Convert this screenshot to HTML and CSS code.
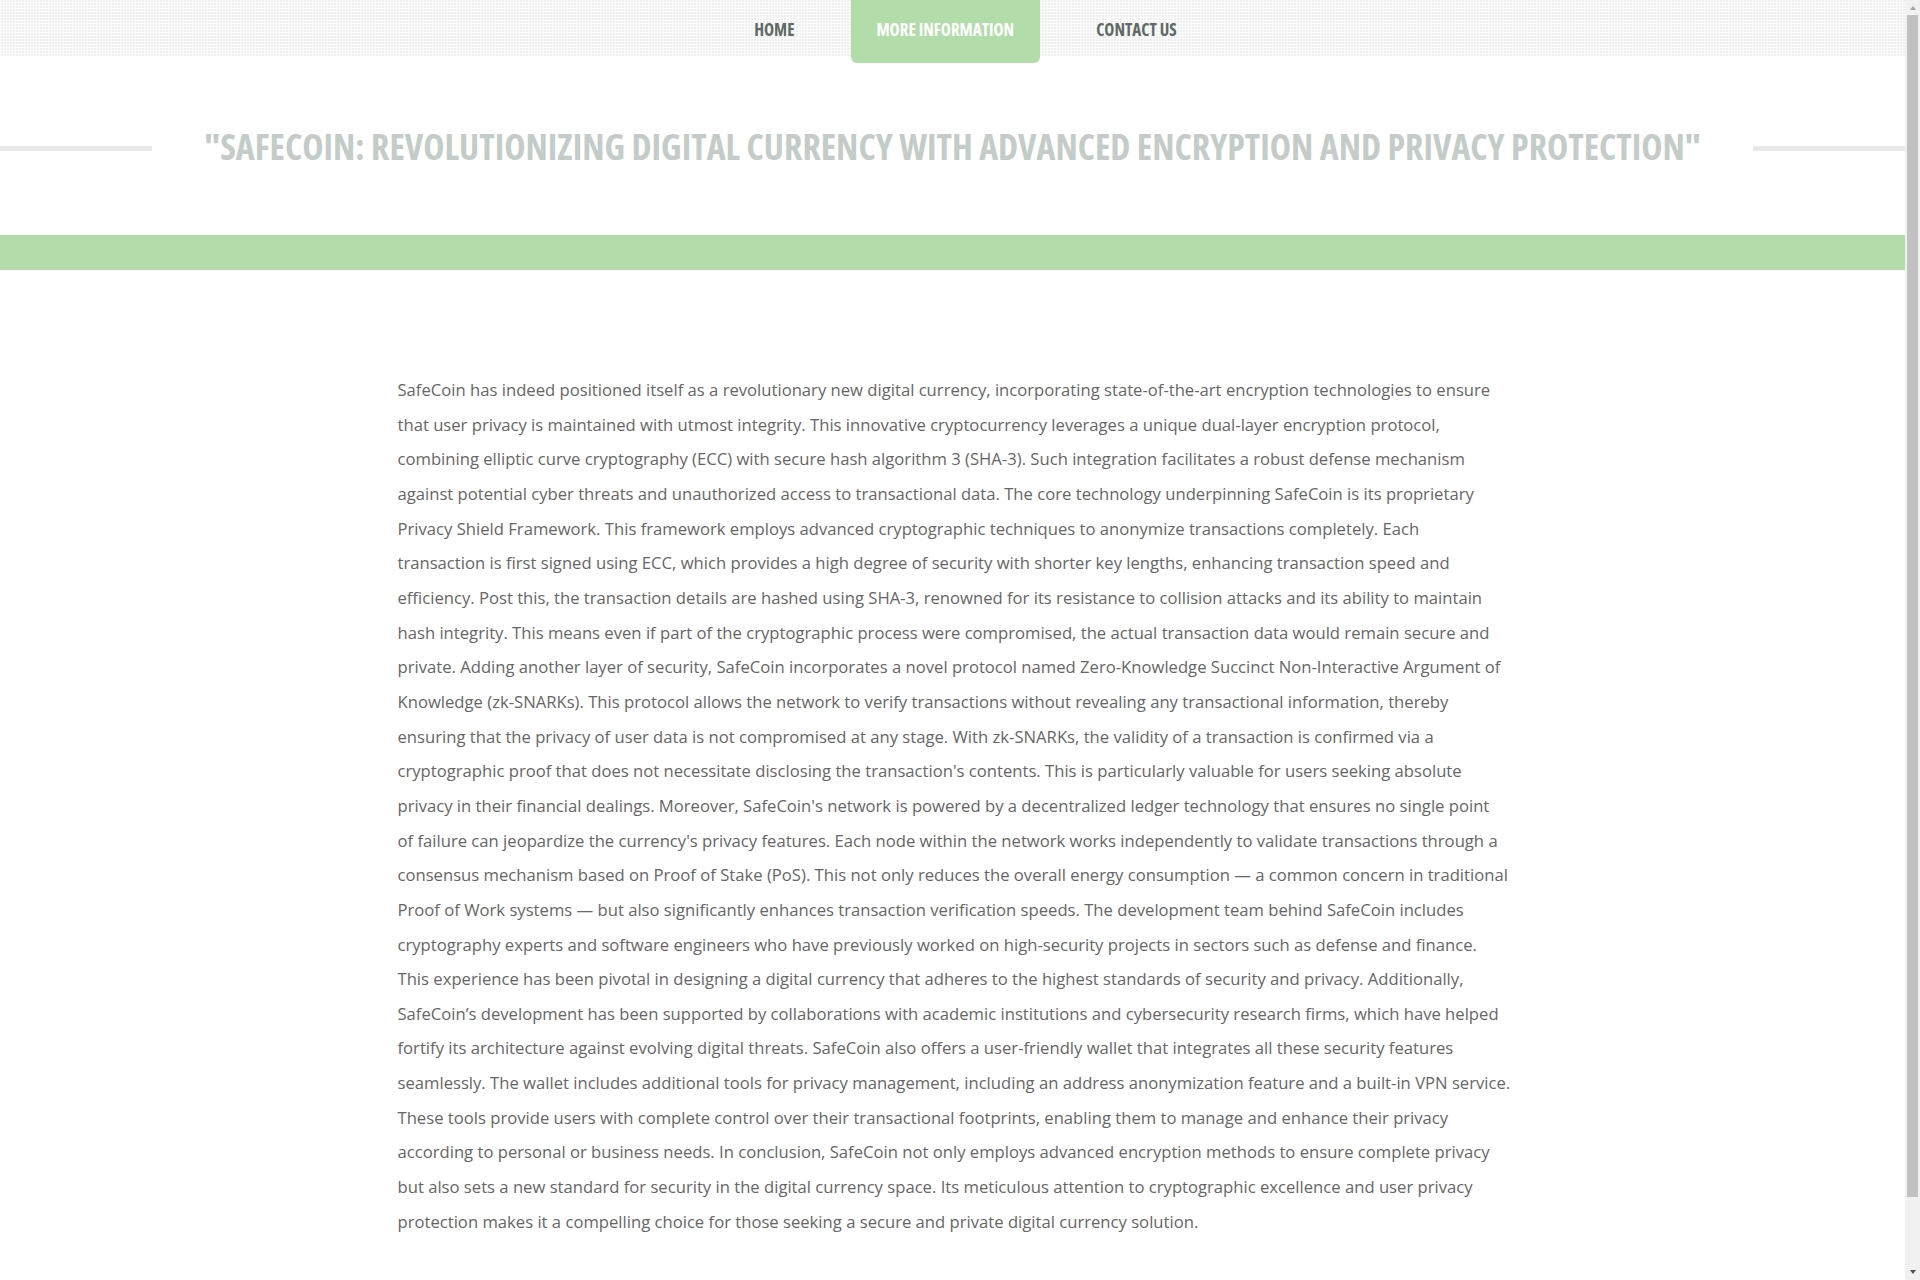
FILE: index.html
```html
<!DOCTYPE html>
<html lang="en">
<head>
<meta charset="utf-8">
<title>SafeCoin</title>
<link rel="stylesheet" href="styles.css">
</head>
<body>
<div class="page">
<header class="topbar">
  <nav class="menu">
    <a class="menu-item" href="#">HOME</a>
    <a class="menu-item active" href="#">MORE INFORMATION</a>
    <a class="menu-item" href="#">CONTACT US</a>
  </nav>
</header>
<section class="title-section">
  <h1 class="page-title"><span>"SAFECOIN: REVOLUTIONIZING DIGITAL CURRENCY WITH ADVANCED ENCRYPTION AND PRIVACY PROTECTION"</span></h1>
</section>
<div class="band"></div>
<main class="content">
  <p class="article">SafeCoin has indeed positioned itself as a revolutionary new digital currency, incorporating state-of-the-art encryption technologies to ensure<br>
that user privacy is maintained with utmost integrity. This innovative cryptocurrency leverages a unique dual-layer encryption protocol,<br>
combining elliptic curve cryptography (ECC) with secure hash algorithm 3 (SHA-3). Such integration facilitates a robust defense mechanism<br>
against potential cyber threats and unauthorized access to transactional data. The core technology underpinning SafeCoin is its proprietary<br>
Privacy Shield Framework. This framework employs advanced cryptographic techniques to anonymize transactions completely. Each<br>
transaction is first signed using ECC, which provides a high degree of security with shorter key lengths, enhancing transaction speed and<br>
efficiency. Post this, the transaction details are hashed using SHA-3, renowned for its resistance to collision attacks and its ability to maintain<br>
hash integrity. This means even if part of the cryptographic process were compromised, the actual transaction data would remain secure and<br>
private. Adding another layer of security, SafeCoin incorporates a novel protocol named Zero-Knowledge Succinct Non-Interactive Argument of<br>
Knowledge (zk-SNARKs). This protocol allows the network to verify transactions without revealing any transactional information, thereby<br>
ensuring that the privacy of user data is not compromised at any stage. With zk-SNARKs, the validity of a transaction is confirmed via a<br>
cryptographic proof that does not necessitate disclosing the transaction's contents. This is particularly valuable for users seeking absolute<br>
privacy in their financial dealings. Moreover, SafeCoin's network is powered by a decentralized ledger technology that ensures no single point<br>
of failure can jeopardize the currency's privacy features. Each node within the network works independently to validate transactions through a<br>
consensus mechanism based on Proof of Stake (PoS). This not only reduces the overall energy consumption — a common concern in traditional<br>
Proof of Work systems — but also significantly enhances transaction verification speeds. The development team behind SafeCoin includes<br>
cryptography experts and software engineers who have previously worked on high-security projects in sectors such as defense and finance.<br>
This experience has been pivotal in designing a digital currency that adheres to the highest standards of security and privacy. Additionally,<br>
SafeCoin’s development has been supported by collaborations with academic institutions and cybersecurity research firms, which have helped<br>
fortify its architecture against evolving digital threats. SafeCoin also offers a user-friendly wallet that integrates all these security features<br>
seamlessly. The wallet includes additional tools for privacy management, including an address anonymization feature and a built-in VPN service.<br>
These tools provide users with complete control over their transactional footprints, enabling them to manage and enhance their privacy<br>
according to personal or business needs. In conclusion, SafeCoin not only employs advanced encryption methods to ensure complete privacy<br>
but also sets a new standard for security in the digital currency space. Its meticulous attention to cryptographic excellence and user privacy<br>
protection makes it a compelling choice for those seeking a secure and private digital currency solution.</p>
</main>
</div>
<div class="scrollbar" aria-hidden="true">
  <span class="sb-arrow sb-up"></span>
  <span class="sb-thumb"></span>
  <span class="sb-arrow sb-down"></span>
</div>
</body>
</html>
```

FILE: styles.css
```css
html, body {
  margin: 0;
  padding: 0;
}
body {
  background: #ffffff;
  font-family: "Open Sans", "Liberation Sans", sans-serif;
  color: #666666;
  padding-right: 15px;
}
.scrollbar {
  position: fixed;
  top: 0;
  right: 0;
  width: 15px;
  height: 100vh;
  background: #f1f1f1;
  display: flex;
  flex-direction: column;
  align-items: center;
}
.sb-arrow {
  display: block;
  width: 0;
  height: 0;
  border-left: 3.5px solid transparent;
  border-right: 3.5px solid transparent;
}
.sb-up {
  margin: 6px 0 5px;
  border-bottom: 4px solid #a3a3a3;
}
.sb-down {
  margin: auto 0 6px;
  border-top: 4px solid #505050;
}
.sb-thumb {
  display: block;
  width: 11px;
  height: 1182px;
  background: #c1c1c1;
}
.topbar {
  height: 57px;
  background-color: #ffffff;
  background-image:
    linear-gradient(90deg, #ffffff 1px, transparent 1px),
    linear-gradient(0deg, #ffffff 1px, #eeeeee 1px);
  background-size: 3px 3px, 3px 3px;
  display: flex;
  justify-content: center;
  align-items: flex-start;
}
.menu {
  display: flex;
  gap: 30px;
  margin-left: 26px;
}
.menu-item {
  display: block;
  height: 57px;
  line-height: 59px;
  padding: 0 26px;
  font-family: "Open Sans", "Liberation Sans", sans-serif;
  font-stretch: 75%;
  font-weight: 700;
  font-size: 17px;
  color: #5e6a65;
  text-decoration: none;
}
.menu-item.active {
  height: 63px;
  background: #b2ddaa;
  color: #ffffff;
  border-radius: 0 0 6px 6px;
}
.title-section {
  height: 178px;
  display: flex;
  align-items: center;
}
.page-title {
  flex: 1;
  margin: 0;
  display: flex;
  align-items: center;
  gap: 52px;
  font-family: "Open Sans", "Liberation Sans", sans-serif;
  font-stretch: 75%;
  font-weight: 700;
  font-size: 35.9px;
  color: #c3ccc7;
  white-space: nowrap;
}
.page-title::before,
.page-title::after {
  content: "";
  flex: 1;
  height: 5px;
  background: #e8e9e8;
  margin-top: 4px;
}
.band {
  height: 35px;
  background: #b2ddaa;
}
.content {
  width: 1110px;
  margin: 0 auto;
  padding: 103px 0 112px;
}
.article {
  margin: 0;
  font-size: 16.65px;
  line-height: 34.65px;
  color: #666666;
  white-space: nowrap;
}
```
